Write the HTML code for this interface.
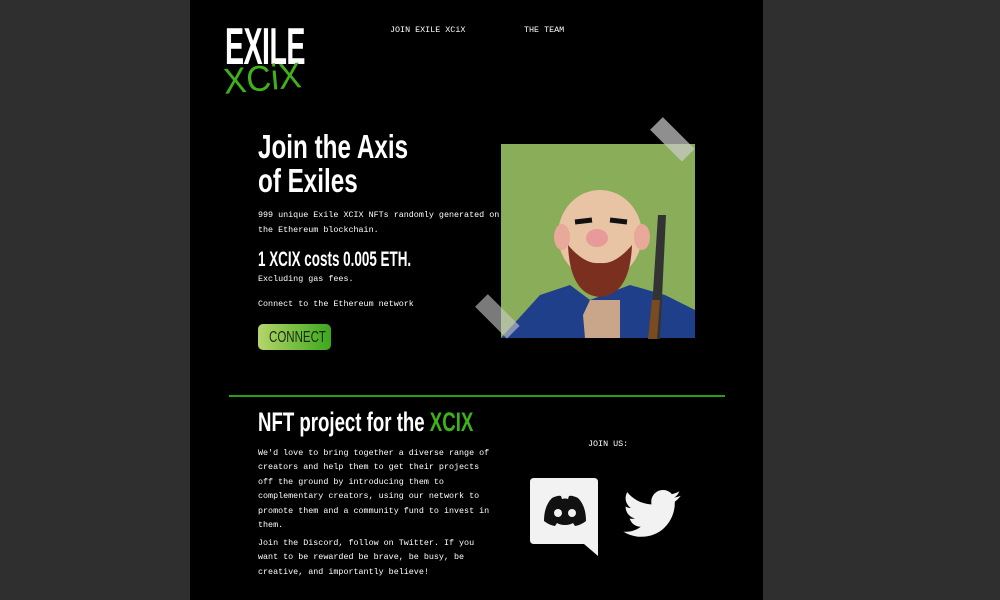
<!DOCTYPE html>
<html><head><meta charset="utf-8"><style>
*{margin:0;padding:0;box-sizing:border-box}
body{width:1000px;height:600px;background:#2f2f2f;overflow:hidden;font-family:"Liberation Mono",monospace;color:#fff}
#page{position:absolute;left:190px;top:0;width:573px;height:600px;background:#000}
.a{position:absolute;white-space:nowrap}
.h{font-family:"Liberation Sans",sans-serif;transform-origin:0 0}
.m{font-size:8.4px;line-height:15px}
</style></head><body>
<div id="page">
 <div class="a h" style="left:35px;top:22px;font-size:52px;font-weight:bold;line-height:50px;transform:scaleX(.55);letter-spacing:-1px">EXILE</div>
 <div class="a" style="left:32px;top:64px;font-family:'Liberation Sans',sans-serif;font-size:36px;line-height:36px;color:#3fb21a;transform:rotate(-5deg) scaleX(.95);transform-origin:0 0">XCiX</div>
 <div class="a m" style="left:200px;top:23px">JOIN EXILE XCiX</div>
 <div class="a m" style="left:334px;top:23px">THE TEAM</div>
 <div class="a h" style="left:68px;top:130px;font-size:33px;line-height:34px;font-weight:bold;transform:scaleX(.735)">Join the Axis<br>of Exiles</div>
 <div class="a m" style="left:68px;top:208px">999 unique Exile XCIX NFTs randomly generated on<br>the Ethereum blockchain.</div>
 <div class="a h" style="left:68px;top:248px;font-size:21px;font-weight:bold;transform:scaleX(.64)">1 XCIX costs 0.005 ETH.</div>
 <div class="a m" style="left:68px;top:272px">Excluding gas fees.</div>
 <div class="a m" style="left:68px;top:297px">Connect to the Ethereum network</div>
 <div class="a" style="left:68px;top:324px;width:73px;height:26px;border-radius:5px;background:linear-gradient(90deg,#b5d56a,#3ca81e)"></div>
 <div class="a h" style="left:79px;top:329px;font-size:16px;color:#1a2a10;transform:scaleX(.72)">CONNECT</div>
 <svg class="a" style="left:280px;top:115px" width="250" height="255" viewBox="-10 -10 250 255">
  <rect x="21" y="19" width="194" height="194" fill="#8aad5a"/>
  <path d="M21 213 L60 170 L90 160 L110 175 L150 160 L185 170 L215 185 L215 213Z" fill="#1f3f8a"/>
  <path d="M103 190 L110 175 L140 175 L140 213 L105 213Z" fill="#c9a58a"/>
  <ellipse cx="120" cy="110" rx="42" ry="45" fill="#e8c4a4"/>
  <ellipse cx="82" cy="112" rx="8" ry="13" fill="#e8a89a"/><ellipse cx="162" cy="112" rx="8" ry="13" fill="#e8a89a"/>
  <path d="M88 120 Q90 170 120 172 Q150 170 152 120 Q135 140 120 138 Q105 140 88 120Z" fill="#7a2f1f"/>
  <path d="M95 97 L112 95 M130 95 L147 97" stroke="#111" stroke-width="5"/>
  <ellipse cx="117" cy="113" rx="11" ry="9" fill="#e89a9a"/>
  <path d="M170 214 L178 90 L186 90 L180 214Z" fill="#333"/><path d="M168 214 L172 175 L180 175 L177 214Z" fill="#7a4a20"/>
  <rect x="170" y="5" width="45" height="18" fill="#ccc" opacity=".7" transform="rotate(45 192 14)"/>
  <rect x="-5" y="182" width="45" height="18" fill="#ccc" opacity=".6" transform="rotate(45 17 191)"/>
 </svg>
 <div class="a" style="left:39px;top:395px;width:496px;height:2px;background:#2a9d14"></div>
 <div class="a h" style="left:68px;top:407px;font-size:27px;font-weight:bold;transform:scaleX(.69)">NFT project for the <span style="color:#3fb21a">XCIX</span></div>
 <div class="a m" style="left:68px;top:446px;line-height:14.4px">We'd love to bring together a diverse range of<br>creators and help them to get their projects<br>off the ground by introducing them to<br>complementary creators, using our network to<br>promote them and a community fund to invest in<br>them.</div>
 <div class="a m" style="left:68px;top:536px;line-height:14.4px">Join the Discord, follow on Twitter. If you<br>want to be rewarded be brave, be busy, be<br>creative, and importantly believe!</div>
 <div class="a m" style="left:398px;top:437px">JOIN US:</div>
 <svg class="a" style="left:340px;top:478px" width="70" height="78" viewBox="0 0 70 78">
  <path d="M4 0 H64 Q68 0 68 4 V78 L54 66 H4 Q0 66 0 62 V4 Q0 0 4 0Z" fill="#f2f2f2"/>
  <path d="M14 43 Q14 28 22 20 Q28 17 31 18 L32 21 Q35 20 38 21 L39 18 Q42 17 48 20 Q56 28 56 43 Q51 47 45 48 L43 45 Q40 47 35 47 Q30 47 27 45 L25 48 Q19 47 14 43Z" fill="#111"/>
  <circle cx="28" cy="35" r="4" fill="#f2f2f2"/><circle cx="42" cy="35" r="4" fill="#f2f2f2"/>
 </svg>
 <svg class="a" style="left:433px;top:490px" width="58" height="48" viewBox="0 0 24 20">
  <path fill="#f2f2f2" d="M24 2.4c-.9.4-1.8.6-2.8.8 1-.6 1.8-1.6 2.2-2.7-1 .6-2 1-3.1 1.2C19.4.7 18.1 0 16.6 0c-2.7 0-4.9 2.2-4.9 4.9 0 .4 0 .8.1 1.1C7.7 5.8 4.1 3.9 1.7.9c-.4.7-.7 1.6-.7 2.5 0 1.7.9 3.2 2.2 4.1-.8 0-1.6-.2-2.2-.6v.1c0 2.4 1.7 4.4 3.9 4.8-.4.1-.8.2-1.3.2-.3 0-.6 0-.9-.1.6 2 2.4 3.4 4.6 3.4-1.7 1.3-3.8 2.1-6.1 2.1-.4 0-.8 0-1.2-.1 2.2 1.4 4.8 2.2 7.5 2.2 9.1 0 14-7.5 14-14v-.6c1-.7 1.8-1.6 2.5-2.5z"/>
 </svg>
</div>
</body></html>
